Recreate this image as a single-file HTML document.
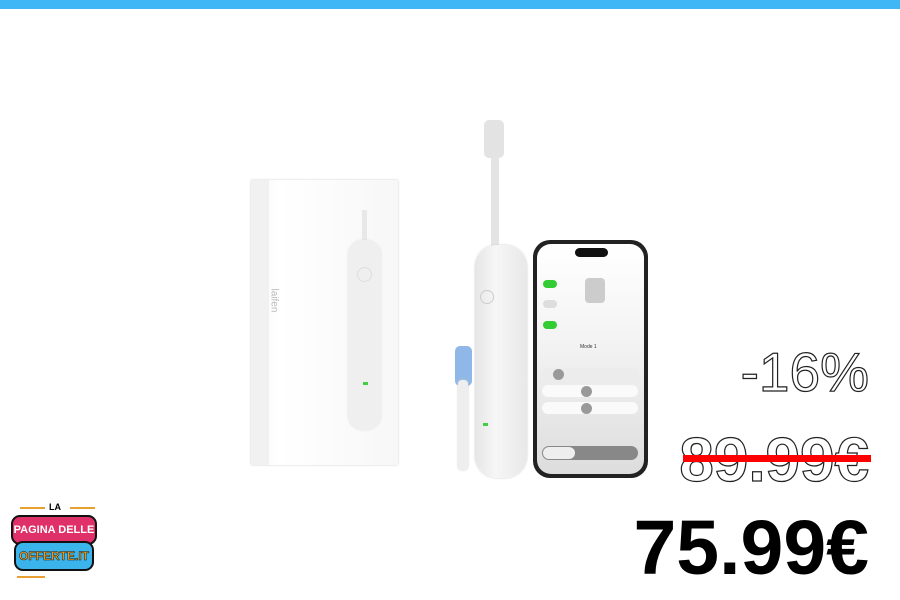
<!DOCTYPE html>
<html><head><meta charset="utf-8"><style>
*{margin:0;padding:0;box-sizing:border-box}
body{width:900px;height:600px;background:#fff;position:relative;overflow:hidden;font-family:"Liberation Sans",sans-serif}
.bar{position:absolute;left:0;top:0;width:900px;height:9px;background:#3fb6f6}
.abs{position:absolute}
.out{color:#fff;-webkit-text-stroke:1.2px #222;font-family:"Liberation Sans",sans-serif;text-align:right;line-height:1;white-space:nowrap}
</style></head><body>
<div class="bar"></div>

<div class="abs" style="left:251px;top:180px;width:147px;height:285px;background:linear-gradient(90deg,#f2f2f2,#fafafa 8%,#fff 20%,#f7f7f7);box-shadow:0 0 2px #ccc"></div>
<div class="abs" style="left:251px;top:180px;width:18px;height:285px;background:#f1f1f1"></div>
<div class="abs" style="left:262px;top:295px;font-size:10px;color:#bbb;transform:rotate(90deg)">laifen</div>
<div class="abs" style="left:362px;top:210px;width:5px;height:50px;background:#e8e8e8"></div>
<div class="abs" style="left:348px;top:240px;width:33px;height:190px;border-radius:15px;background:#efefef;box-shadow:0 0 2px #ddd"></div>
<div class="abs" style="left:357px;top:267px;width:15px;height:15px;border-radius:50%;border:1px solid #ddd"></div>
<div class="abs" style="left:363px;top:382px;width:5px;height:3px;background:#4c4"></div>

<div class="abs" style="left:455px;top:346px;width:17px;height:40px;border-radius:5px;background:#8fb8e8"></div>
<div class="abs" style="left:458px;top:380px;width:10px;height:90px;border-radius:4px;background:#eee;box-shadow:0 0 2px #ccc"></div>

<div class="abs" style="left:484px;top:120px;width:20px;height:38px;border-radius:5px;background:#e3e3e3"></div>
<div class="abs" style="left:491px;top:155px;width:8px;height:100px;background:#e4e4e4"></div>
<div class="abs" style="left:475px;top:245px;width:52px;height:233px;border-radius:22px;background:linear-gradient(90deg,#e6e6e6,#f6f6f6 40%,#e8e8e8);box-shadow:0 0 2px #ccc"></div>
<div class="abs" style="left:480px;top:290px;width:14px;height:14px;border-radius:50%;border:1px solid #ccc"></div>
<div class="abs" style="left:483px;top:423px;width:5px;height:3px;background:#4c4"></div>

<div class="abs" style="left:533px;top:240px;width:115px;height:238px;border-radius:17px;background:#222"></div>
<div class="abs" style="left:537px;top:244px;width:107px;height:230px;border-radius:14px;background:linear-gradient(#fff,#f4f4f4 40%,#ddd)"></div>
<div class="abs" style="left:575px;top:248px;width:33px;height:9px;border-radius:5px;background:#111"></div>
<div class="abs" style="left:543px;top:280px;width:14px;height:8px;border-radius:4px;background:#3c3"></div>
<div class="abs" style="left:543px;top:300px;width:14px;height:8px;border-radius:4px;background:#ddd"></div>
<div class="abs" style="left:543px;top:321px;width:14px;height:8px;border-radius:4px;background:#3c3"></div>
<div class="abs" style="left:585px;top:278px;width:20px;height:25px;border-radius:4px;background:#ccc"></div>
<div class="abs" style="left:580px;top:344px;font-size:5px;color:#333">Mode 1</div>
<div class="abs" style="left:542px;top:368px;width:96px;height:12px;border-radius:6px;background:#ececec"></div>
<div class="abs" style="left:542px;top:385px;width:96px;height:12px;border-radius:6px;background:#fafafa"></div>
<div class="abs" style="left:542px;top:402px;width:96px;height:12px;border-radius:6px;background:#fafafa"></div>
<div class="abs" style="left:553px;top:369px;width:11px;height:11px;border-radius:50%;background:#999"></div>
<div class="abs" style="left:581px;top:386px;width:11px;height:11px;border-radius:50%;background:#999"></div>
<div class="abs" style="left:581px;top:403px;width:11px;height:11px;border-radius:50%;background:#999"></div>
<div class="abs" style="left:542px;top:446px;width:96px;height:14px;border-radius:7px;background:#888"></div>
<div class="abs" style="left:543px;top:447px;width:32px;height:12px;border-radius:6px;background:#eee"></div>

<div class="abs out" style="right:31px;top:345px;font-size:55px">-16%</div>
<div class="abs out" style="right:31px;top:430px;font-size:62px;font-weight:bold">89.99€</div>
<div class="abs" style="left:683px;top:455px;width:188px;height:7px;background:#f00"></div>
<div class="abs" style="right:31px;top:510px;font-size:77px;line-height:1;font-weight:bold;color:#000;white-space:nowrap">75.99€</div>

<div class="abs" style="left:20px;top:507px;width:25px;height:2px;background:#e8a030"></div>
<div class="abs" style="left:70px;top:507px;width:25px;height:2px;background:#e8a030"></div>
<div class="abs" style="left:49px;top:502px;font-size:9px;font-weight:bold">LA</div>
<div class="abs" style="left:11px;top:515px;width:86px;height:30px;border-radius:9px;background:#e0306a;border:2px solid #111;color:#fff;font-size:11px;font-weight:bold;text-align:center;line-height:26px">PAGINA DELLE</div>
<div class="abs" style="left:14px;top:541px;width:80px;height:30px;border-radius:9px;background:#3ab4ea;border:2px solid #111;color:#f5a020;font-size:12px;font-weight:bold;text-align:center;line-height:26px;-webkit-text-stroke:.5px #111">OFFERTE.IT</div>
<div class="abs" style="left:17px;top:576px;width:28px;height:2px;background:#e8a030"></div>
</body></html>
